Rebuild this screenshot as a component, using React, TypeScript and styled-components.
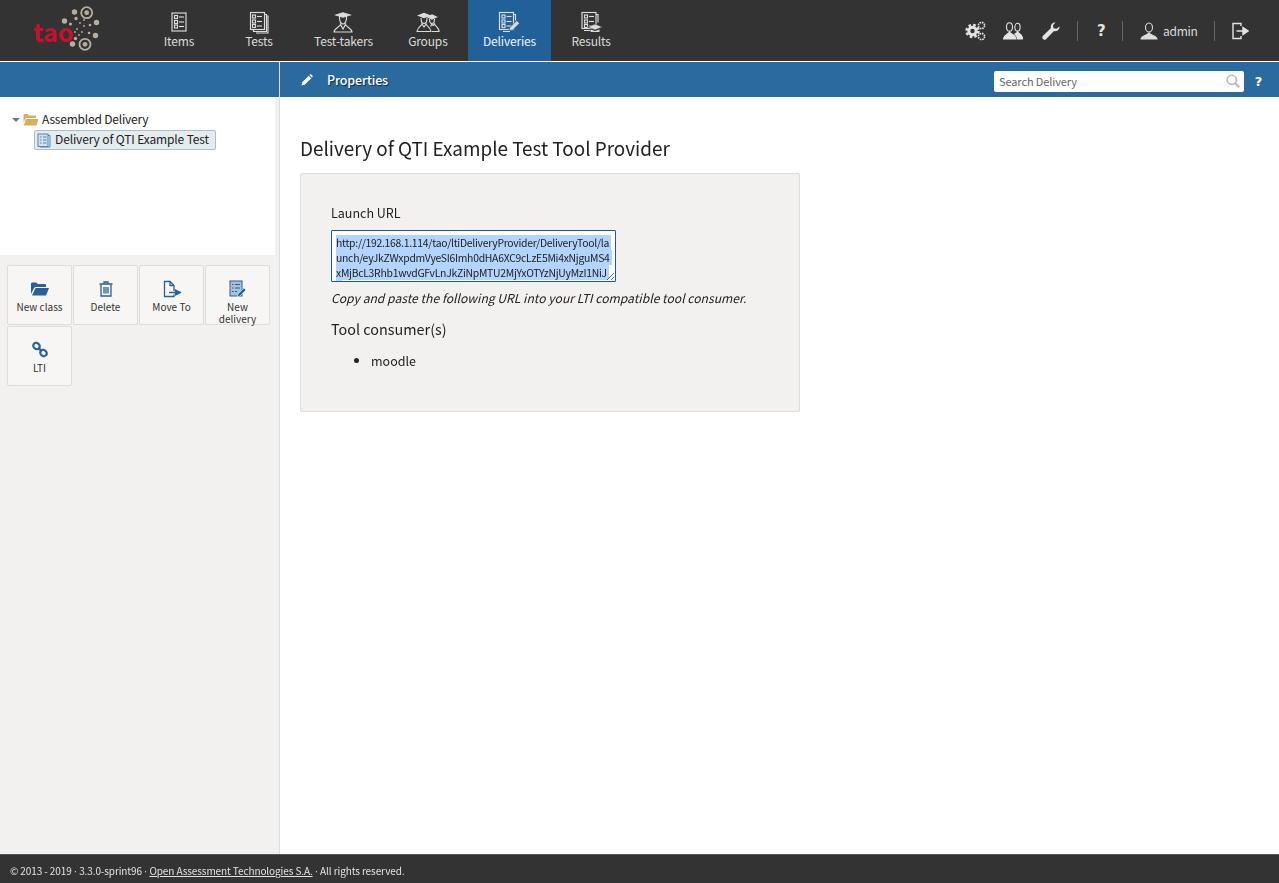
import * as React from "react";
import styled, { createGlobalStyle } from "styled-components";

const Global = createGlobalStyle`
  html, body, #root {
    height: 100%;
    margin: 0;
  }
  body {
    font-family: "Noto Sans CJK SC", "Noto Sans", sans-serif;
    color: #222;
    background: #fff;
  }
`;

const Page = styled.div`
  display: flex;
  flex-direction: column;
  height: 100%;
  overflow: hidden;
`;

const TopBar = styled.header`
  height: 61px;
  flex: none;
  display: flex;
  align-items: stretch;
  background: #333;
  color: #e6e6e6;
`;

const LogoSlot = styled.a`
  width: 139px;
  flex: none;
  position: relative;
`;

const LogoWord = styled.span`
  position: absolute;
  left: 33px;
  top: 14px;
  font-size: 25px;
  font-weight: 700;
  line-height: 34px;
  color: #c8102e;
`;

const Nav = styled.nav`
  display: flex;
  align-items: stretch;
  flex: 1 1 0;
`;

const NavItem = styled.a<{ $active?: boolean }>`
  min-width: 80px;
  box-sizing: border-box;
  padding: 12px 15px 0;
  display: flex;
  flex-direction: column;
  align-items: center;
  font-size: 12px;
  line-height: 18px;
  letter-spacing: -0.15px;
  color: ${p => (p.$active ? "#eef3f8" : "#dcdcdc")};
  background: ${p => (p.$active ? "#22609a" : "transparent")};
`;

const NavIcon = styled.svg`
  width: 22px;
  height: 20px;
  overflow: visible;
  fill: none;
  stroke: #dcdcdc;
  stroke-width: 1.15;
`;

const Tools = styled.div`
  display: flex;
  align-items: center;
  height: 61px;
  padding-right: 20px;
`;

const Tool = styled.span`
  display: flex;
  align-items: center;
  justify-content: center;
  width: 37.5px;
  color: #e4e4e4;
`;

const ToolSep = styled.span<{ $left: number; $right: number }>`
  width: 1px;
  height: 20px;
  background: #666;
  margin: 0 ${p => p.$right}px 0 ${p => p.$left}px;
`;

const UserTool = styled.span`
  display: flex;
  align-items: center;
  gap: 5px;
  margin-left: 17px;
  font-size: 12px;
  letter-spacing: -0.3px;
  color: #ddd;
`;

const ActionBar = styled.div`
  height: 35px;
  flex: none;
  margin-top: 1px;
  display: flex;
  background: #2a6a9e;
  color: #fff;
`;

const ActionSide = styled.div`
  width: 279px;
  flex: none;
  border-right: 1px solid #dbe6ee;
`;

const ActionMain = styled.div`
  flex: 1 1 0;
  display: flex;
  align-items: center;
  padding: 0 6px 0 21px;
`;

const TabLabel = styled.span`
  margin-left: 14px;
  font-size: 12.5px;
  font-weight: 500;
  letter-spacing: -0.15px;
  text-shadow: 1px 1px 1px rgba(0, 0, 0, 0.6);
`;

const SearchBox = styled.label`
  margin-left: auto;
  margin-top: 3px;
  width: 250px;
  height: 21px;
  box-sizing: border-box;
  background: #fff;
  border-radius: 2px;
  display: flex;
  align-items: center;
  padding: 0 4px 0 5px;
`;

const SearchInput = styled.input`
  flex: 1 1 0;
  min-width: 0;
  border: 0;
  outline: 0;
  padding: 0;
  font: 11px/18px "Noto Sans CJK SC", sans-serif;
  letter-spacing: -0.1px;
  color: #222;
  &::placeholder {
    color: #666;
    opacity: 1;
  }
`;

const HelpMark = styled.span`
  width: 29px;
  flex: none;
  margin-bottom: 2px;
  text-align: center;
`;

const Body = styled.div`
  flex: 1 1 0;
  min-height: 0;
  display: flex;
`;

const Sidebar = styled.aside`
  width: 280px;
  flex: none;
  box-sizing: border-box;
  border-right: 1px solid #ddd;
  background: #f3f1ef;
  display: flex;
  flex-direction: column;
`;

const TreePane = styled.div`
  height: 158px;
  width: 275px;
  background: #fff;
  box-sizing: border-box;
  padding: 13px 0 0 11px;
  font-size: 12px;
  letter-spacing: -0.2px;
`;

const TreeRow = styled.div`
  display: flex;
  align-items: center;
  gap: 3px;
  height: 18px;
  line-height: 18px;
`;

const Caret = styled.span`
  width: 0;
  height: 0;
  border-left: 4px solid transparent;
  border-right: 4px solid transparent;
  border-top: 4px solid #777;
  margin: 2px 0 0 1px;
`;

const TreeSelected = styled.div`
  margin: 2px 0 0 23px;
  width: 182px;
  height: 20px;
  box-sizing: border-box;
  display: flex;
  align-items: center;
  gap: 4px;
  padding: 0 0 2px 2px;
  background: #e4ecef;
  border: 1px solid #a9c0cc;
  border-radius: 2px;
  line-height: 18px;
  letter-spacing: -0.13px;
  white-space: nowrap;
  svg {
    flex: none;
    margin-top: 2px;
  }
`;

const ActionGrid = styled.div`
  display: flex;
  flex-wrap: wrap;
  gap: 1px;
  padding: 10px 0 0 7px;
`;

const ActionButton = styled.button`
  width: 65px;
  height: 60px;
  box-sizing: border-box;
  padding: 14px 2px 0;
  background: #f7f6f5;
  border: 1px solid #ddd;
  border-radius: 2px;
  display: flex;
  flex-direction: column;
  align-items: center;
  font: 10px/12px "Noto Sans CJK SC", sans-serif;
  color: #333;
`;

const ButtonIcon = styled.svg`
  width: 18px;
  height: 18px;
  margin-bottom: 3px;
  flex: none;
`;

const Main = styled.main`
  flex: 1 1 0;
  padding: 37px 20px 0;
`;

const Title = styled.h1`
  margin: 0 0 11px;
  font-size: 18.9px;
  line-height: 28px;
  font-weight: 400;
`;

const Panel = styled.section`
  width: 500px;
  height: 239px;
  box-sizing: border-box;
  padding: 30px 30px 0;
  background: #f3f1ef;
  border: 1px solid #ddd;
  border-radius: 2px;
  font-size: 12.5px;
`;

const FieldLabel = styled.label`
  display: block;
  font-size: 12.5px;
  line-height: 18px;
  margin-bottom: 8px;
`;

const UrlBox = styled.textarea`
  display: block;
  width: 285px;
  height: 52px;
  box-sizing: border-box;
  padding: 4px;
  border: 1px solid #1b5a92;
  border-radius: 1px;
  outline: 0;
  background: #fff;
  font: 10.4px/15px "Noto Sans CJK SC", sans-serif;
  letter-spacing: -0.27px;
  color: #222;
  scrollbar-width: none;
  word-break: break-all;
  &::selection {
    background: #b3d4fc;
  }
`;

const Hint = styled.p`
  margin: 6px 0 0;
  font-style: italic;
  font-size: 12.15px;
  line-height: 20px;
  white-space: nowrap;
`;

const Subtitle = styled.h2`
  margin: 11px 0 0;
  font-size: 14.4px;
  line-height: 20px;
  font-weight: 400;
`;

const ConsumerList = styled.ul`
  margin: 12px 0 0;
  padding-left: 40px;
  line-height: 20px;
`;

const Footer = styled.footer`
  height: 29px;
  flex: none;
  box-sizing: border-box;
  padding: 7px 0 0 10px;
  background: #333;
  border-top: 1px solid #555;
  color: #e2e2e2;
  font-size: 10px;
  letter-spacing: -0.1px;
  line-height: 18px;
  a {
    color: inherit;
    text-decoration: underline;
  }
`;

const Dot = styled.span`
  font-family: "Liberation Sans", sans-serif;
`;

const blue = "#266299";

const ListLines = ({ dx = 0, dy = 0 }: { dx?: number; dy?: number }) => (
  <g transform={`translate(${dx} ${dy})`}>
    <rect x="6.500" y="3.500" width="3" height="3" />
    <path d="M11 5h5" />
    <rect x="6.500" y="8.500" width="3" height="3" />
    <path d="M11 10h5" />
    <rect x="6.500" y="13" width="3" height="3" />
    <path d="M11 14.500h5" />
  </g>
);

const Cap = ({ x, y, w }: { x: number; y: number; w: number }) => (
  <path d={`M${x - w} ${y}l${w} -2.200l${w} 2.200l-${w} 2.200z`} fill="#dcdcdc" />
);

const navItems: { label: string; active?: boolean; icon: React.ReactNode }[] = [
  {
    label: "Items",
    icon: (
      <>
        <rect x="4" y="1" width="14" height="18" />
        <ListLines />
      </>
    ),
  },
  {
    label: "Tests",
    icon: (
      <>
        <rect x="2.500" y="0.500" width="14" height="17" />
        <path d="M16.500 2.500h2v17h-13v-2M18.500 4h1.500v17H8" />
        <ListLines dx={-2} dy={-0.500} />
      </>
    ),
  },
  {
    label: "Test-takers",
    icon: (
      <>
        <Cap x={11} y={3} w={7} />
        <path d="M7.500 6c0 3 1.500 6 3.500 6s3.500-3 3.500-6V3.500h-7z" />
        <path d="M8.500 12.500c0 2-6 3.500-6.500 7.500h18c-.5-4-6.500-5.500-6.500-7.500L11 17z" />
      </>
    ),
  },
  {
    label: "Groups",
    icon: (
      <>
        <Cap x={7} y={3.500} w={5.500} />
        <Cap x={15} y={5} w={4.500} />
        <path d="M4 6c0 3 1 5.500 3 5.500s3-2.500 3-5.500M12.500 7c0 2.500 1 4.500 2.500 4.500s2.500-2 2.500-4.500" />
        <path d="M5 12c0 1.500-4.500 3-5 7.500h14c-.5-4.500-5-6-5-7.500L7 15zM13.500 14.500c.5-.5 1-1.500 1-2.500l1.500 1.500 1.500-1.500c0 1.500 3.500 2.500 4.500 6.500v1H15" />
      </>
    ),
  },
  {
    label: "Deliveries",
    active: true,
    icon: (
      <>
        <rect x="1.500" y="0.500" width="14" height="17" />
        <path d="M15.500 2.500h2v6M5 19.500h7" />
        <ListLines dx={-2.500} dy={-0.500} />
        <path d="M11 18.500l.8-3 7-7 2.700 2.700-7 7z" fill="#dcdcdc" stroke="#22609a" strokeWidth="0.700" />
      </>
    ),
  },
  {
    label: "Results",
    icon: (
      <>
        <rect x="2" y="0.500" width="14" height="16" />
        <path d="M16 2.500h2v8M4 18.500h6" />
        <ListLines dx={-2} dy={-0.500} />
        <path d="M7.500 15l7.500-3 7.500 3-7.500 3z" fill="#dcdcdc" stroke="#333" strokeWidth="0.600" />
        <path d="M10.500 17.500v2.500h9v-2.500l-4.500 1.500z" fill="#dcdcdc" stroke="none" />
      </>
    ),
  },
];

const GearsIcon = () => (
  <svg width="21" height="20" viewBox="0 0 21 20" fill="none" stroke="currentColor">
    <circle cx="7.500" cy="10" r="6" strokeWidth="2.500" strokeDasharray="2.600 2.100" />
    <circle cx="7.500" cy="10" r="3.700" strokeWidth="3" />
    <circle cx="16.500" cy="4.500" r="3.100" strokeWidth="1.600" strokeDasharray="1.600 0.830" />
    <circle cx="16.500" cy="15.500" r="3.100" strokeWidth="1.600" strokeDasharray="1.600 0.830" />
  </svg>
);

const UsersIcon = () => (
  <svg width="20" height="18" viewBox="0 0 20 18" fill="none" stroke="currentColor" strokeWidth="1.100">
    <ellipse cx="6.500" cy="5" rx="3" ry="4.200" />
    <ellipse cx="14.500" cy="5.200" rx="2.600" ry="3.900" />
    <path d="M6.500 10c-1 2-5.500 2.500-6 7h12.500c-.5-4.500-5.500-5-6.500-7z" fill="currentColor" />
    <path d="M14.500 10c1 1.500 5 2.500 5.200 7H14.500c0-2-1-3.500-2.500-5 1-.5 2-1 2.500-2z" fill="currentColor" />
  </svg>
);

const WrenchIcon = () => (
  <svg width="18" height="18" viewBox="0 0 18 18" fill="currentColor">
    <path d="M17.500 4.500c.3 3-2.500 5.500-5.500 4.500L4 17.200c-.8.800-1.800.800-2.700 0l-.5-.5c-.7-.8-.7-1.800 0-2.600L9 6c-1-3 1.500-5.800 4.500-5.500L11 3.200l.5 3 3 .6z" />
  </svg>
);

const QuestionMark = styled.span<{ $size?: number }>`
  font-family: "DejaVu Sans", sans-serif;
  font-weight: 700;
  font-size: ${p => p.$size ?? 15}px;
  line-height: 18px;
`;

const UserIcon = () => (
  <svg width="18" height="18" viewBox="0 0 18 18" fill="none" stroke="currentColor" strokeWidth="1.100">
    <ellipse cx="9" cy="5.500" rx="3.500" ry="4.500" />
    <path d="M9 10.500c-.5 2.500-7.500 3-8 6.500h16c-.5-3.500-7.500-4-8-6.500z" fill="currentColor" />
  </svg>
);

const LogoutIcon = () => (
  <svg width="18" height="18" viewBox="0 0 18 18" fill="none" stroke="currentColor" strokeWidth="1.400">
    <path d="M10 4V1.500H2v15h8V14" />
    <path d="M5.500 9H12V5.500L17 9l-5 3.500V9" fill="currentColor" />
  </svg>
);

const SearchIcon = () => (
  <svg width="14" height="14" viewBox="0 0 14 14" fill="none" stroke="#bbb" strokeWidth="1.600">
    <circle cx="5.800" cy="5.800" r="4.600" />
    <path d="M9 9l4.300 4.300" strokeWidth="2.200" />
  </svg>
);

const PencilSmall = () => (
  <svg width="12" height="12" viewBox="0 0 12 12" fill="#fff">
    <path d="M.5 11.500l.7-3.200L7.800 1.700l2.500 2.500-6.600 6.600zM8.500 1l.7-.5c.4-.3.800-.3 1.100 0l1.200 1.200c.3.300.3.700 0 1l-.5.800z" />
  </svg>
);

const FolderIcon = () => (
  <svg width="16" height="13" viewBox="0 0 16 13" fill="#d9ae62">
    <path d="M.5 2.500c0-1 .5-1.500 1.200-1.500h3l1.300 1.500h6c.7 0 1 .4 1 1V5H4C3 5 2.500 5.500 2 6.500L.5 10z" />
    <path d="M3 6h12.500L13.500 12.500H.7z" />
  </svg>
);

const DocIcon = () => (
  <svg width="14" height="15" viewBox="0 0 14 15" fill="#d5e0ea" stroke="#4f86b3" strokeWidth="1">
    <rect x="1" y="1" width="10" height="12.500" />
    <path d="M11 2.500h2v11.500H3" fill="none" />
    <path d="M3 4h1.500M6 4h3.500M3 7h1.500M6 7h3.500M3 10h1.500M6 10h3.500" />
  </svg>
);

const buttons: { label: string; icon: React.ReactNode }[] = [
  {
    label: "New class",
    icon: (
      <g fill={blue}>
        <path d="M0 4c0-1 .5-1.500 1.200-1.500h4l1.500 1.500h7c.8 0 1.300.5 1.300 1.300V7H5C4 7 3.200 7.500 2.800 8.500L0 14z" />
        <path d="M4.500 8H18l-3 7.500H1z" />
      </g>
    ),
  },
  {
    label: "Delete",
    icon: (
      <g fill="none" stroke={blue} strokeWidth="1.300">
        <path d="M2.500 4h13M7 4V2h4v2" />
        <path d="M4 4.500v11.500h10V4.500" />
        <path d="M7 7v6.500M9 7v6.500M11 7v6.500" />
      </g>
    ),
  },
  {
    label: "Move To",
    icon: (
      <g fill="none" stroke={blue} strokeWidth="1.300">
        <path d="M11 11V5.500L7 1.500H1.500v15H11v-2" />
        <path d="M7 1.500v4h4" />
        <path d="M6 12.500h6.500V10l5 2.500-5 2.500v-2.500" fill={blue} />
      </g>
    ),
  },
  {
    label: "New delivery",
    icon: (
      <g fill="#a8c0d8" stroke={blue} strokeWidth="1">
        <rect x="1" y="1" width="12" height="15" />
        <path d="M3 4.500h1.500M6 4.500h5M3 8h1.500M6 8h5M3 11.500h1.500M6 11.500h2" fill="none" />
        <path d="M8 17l1-3 6-6 2 2-6 6z" fill={blue} stroke="#f7f6f5" strokeWidth="0.600" />
      </g>
    ),
  },
  {
    label: "LTI",
    icon: (
      <g fill="none" stroke={blue} strokeWidth="2.200">
        <ellipse cx="5.500" cy="5" rx="3.400" ry="3" transform="rotate(35 5.500 5)" />
        <ellipse cx="12.500" cy="12" rx="3.400" ry="3" transform="rotate(35 12.500 12)" />
        <path d="M7 7l4 3" />
      </g>
    ),
  },
];

const launchUrl =
  "http://192.168.1.114/tao/ltiDeliveryProvider/DeliveryTool/launch/eyJkZWxpdmVyeSI6Imh0dHA6XC9cLzE5Mi4xNjguMS4xMjBcL3Rhb1wvdGFvLnJkZiNpMTU2MjYxOTYzNjUyMzI1NiJ9";

const markDots: [number, number, number][] = [
  [74.500, 12, 2.700],
  [64.500, 21, 2.700],
  [96.500, 22.500, 2.700],
  [95.500, 35.500, 2.700],
  [72.500, 44, 2.700],
  [76, 18.500, 1.700],
  [70.500, 24, 1.600],
  [75.500, 38.500, 1.700],
  [90, 25, 1.300],
  [89, 33, 1.300],
  [80, 23, 0.900],
  [84, 26, 0.900],
  [77, 29, 0.900],
  [82, 32, 0.900],
  [79, 35, 0.900],
  [75, 32, 0.900],
  [84, 20, 0.900],
];

const TaoMark = () => (
  <svg width="139" height="61" viewBox="0 0 139 61" fill="#b9ae9e">
    <g fill="none" stroke="#b9ae9e" strokeWidth="1.800">
      <circle cx="86.700" cy="12.700" r="5.500" />
      <circle cx="85" cy="44.300" r="5.500" />
    </g>
    <circle cx="86.700" cy="12.700" r="2.400" />
    <circle cx="85" cy="44.300" r="2.400" />
    {markDots.map(([cx, cy, r]) => (
      <circle key={`${cx}-${cy}`} cx={cx} cy={cy} r={r} />
    ))}
  </svg>
);

const App = () => {
  const urlRef = React.useRef<HTMLTextAreaElement>(null);

  React.useEffect(() => {
    urlRef.current?.focus();
    urlRef.current?.select();
  }, []);

  return (
    <Page>
      <Global />
      <TopBar>
        <LogoSlot>
          <TaoMark />
          <LogoWord>tao</LogoWord>
        </LogoSlot>
        <Nav>
          {navItems.map(item => (
            <NavItem key={item.label} $active={item.active}>
              <NavIcon viewBox="0 0 22 20">{item.icon}</NavIcon>
              {item.label}
            </NavItem>
          ))}
        </Nav>
        <Tools>
          <Tool>
            <GearsIcon />
          </Tool>
          <Tool>
            <UsersIcon />
          </Tool>
          <Tool>
            <WrenchIcon />
          </Tool>
          <ToolSep $left={7} $right={5} />
          <Tool>
            <QuestionMark>?</QuestionMark>
          </Tool>
          <ToolSep $left={2} $right={0} />
          <UserTool>
            <UserIcon />
            admin
          </UserTool>
          <ToolSep $left={16} $right={7} />
          <Tool>
            <LogoutIcon />
          </Tool>
        </Tools>
      </TopBar>
      <ActionBar>
        <ActionSide />
        <ActionMain>
          <PencilSmall />
          <TabLabel>Properties</TabLabel>
          <SearchBox>
            <SearchInput placeholder="Search Delivery" />
            <SearchIcon />
          </SearchBox>
          <HelpMark>
            <QuestionMark $size={13}>?</QuestionMark>
          </HelpMark>
        </ActionMain>
      </ActionBar>
      <Body>
        <Sidebar>
          <TreePane>
            <TreeRow>
              <Caret />
              <FolderIcon />
              Assembled Delivery
            </TreeRow>
            <TreeSelected>
              <DocIcon />
              Delivery of QTI Example Test
            </TreeSelected>
          </TreePane>
          <ActionGrid>
            {buttons.map(b => (
              <ActionButton key={b.label}>
                <ButtonIcon viewBox="0 0 18 18">{b.icon}</ButtonIcon>
                {b.label}
              </ActionButton>
            ))}
          </ActionGrid>
        </Sidebar>
        <Main>
          <Title>Delivery of QTI Example Test Tool Provider</Title>
          <Panel>
            <FieldLabel>Launch URL</FieldLabel>
            <UrlBox ref={urlRef} readOnly defaultValue={launchUrl} />
            <Hint>Copy and paste the following URL into your LTI compatible tool consumer.</Hint>
            <Subtitle>Tool consumer(s)</Subtitle>
            <ConsumerList>
              <li>moodle</li>
            </ConsumerList>
          </Panel>
        </Main>
      </Body>
      <Footer>
        © 2013 - 2019 <Dot>·</Dot> 3.3.0-sprint96 <Dot>·</Dot> <a>Open Assessment Technologies S.A.</a> <Dot>·</Dot> All
        rights reserved.
      </Footer>
    </Page>
  );
};

export default App;
